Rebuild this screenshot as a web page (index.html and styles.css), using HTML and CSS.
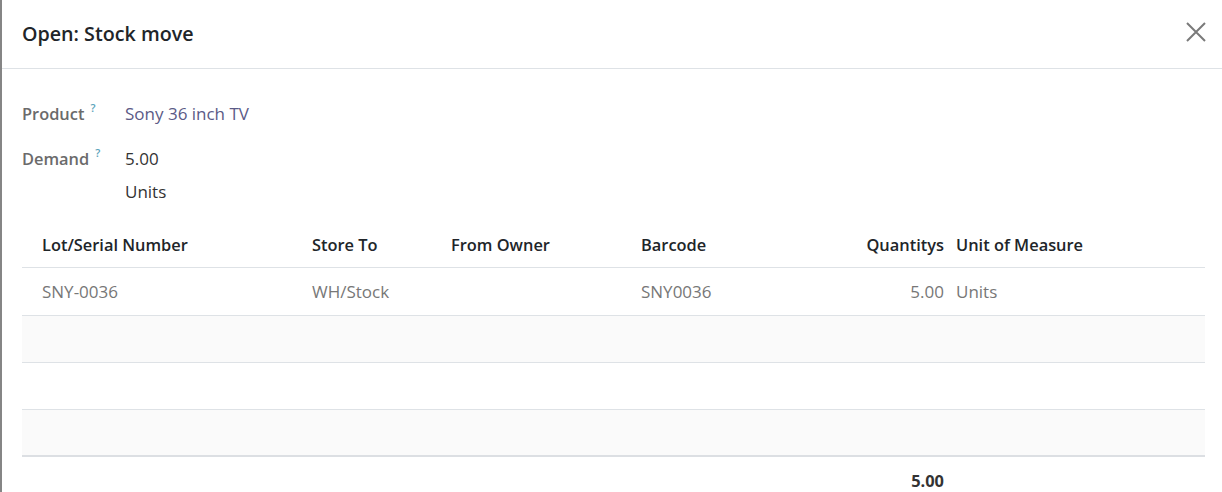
FILE: index.html
```html
<!DOCTYPE html>
<html>
<head>
<meta charset="utf-8">
<link rel="stylesheet" href="styles.css">
</head>
<body>
<div class="modal">
  <header class="modal-header">
    <h4 class="modal-title">Open: Stock move</h4>
    <button class="close" aria-label="Close">
      <svg width="20" height="20" viewBox="0 0 20 20"><path d="M1 1 L19 19 M19 1 L1 19" stroke="#7a7a7a" stroke-width="2" fill="none"/></svg>
    </button>
  </header>
  <div class="modal-body">
    <div class="fields">
      <div class="field">
        <div class="label">Product<sup>?</sup></div>
        <div class="value link">Sony 36 inch TV</div>
      </div>
      <div class="field">
        <div class="label">Demand<sup>?</sup></div>
        <div class="value stack"><span>5.00</span><span>Units</span></div>
      </div>
    </div>
    <div class="table">
      <div class="row head">
        <div class="c c1">Lot/Serial Number</div>
        <div class="c c2">Store To</div>
        <div class="c c3">From Owner</div>
        <div class="c c4">Barcode</div>
        <div class="c c5">Quantitys</div>
        <div class="c c6">Unit of Measure</div>
      </div>
      <div class="row data">
        <div class="c c1">SNY-0036</div>
        <div class="c c2">WH/Stock</div>
        <div class="c c3"></div>
        <div class="c c4">SNY0036</div>
        <div class="c c5">5.00</div>
        <div class="c c6">Units</div>
      </div>
      <div class="row empty striped"></div>
      <div class="row empty"></div>
      <div class="row empty striped last"></div>
      <div class="row foot">
        <div class="c c1"></div>
        <div class="c c2"></div>
        <div class="c c3"></div>
        <div class="c c4"></div>
        <div class="c c5">5.00</div>
        <div class="c c6"></div>
      </div>
    </div>
  </div>
</div>
</body>
</html>
```
FILE: styles.css
```css
html, body {
  margin: 0;
  padding: 0;
  background: #fff;
}
body {
  font-family: "Open Sans", "Noto Sans", sans-serif;
  font-size: 17px;
  color: #333;
}
.modal {
  border-left: 2px solid #858585;
  height: 492px;
  box-sizing: border-box;
  overflow: hidden;
}
.modal-header {
  height: 69px;
  box-sizing: border-box;
  border-bottom: 1px solid #dee2e6;
  display: flex;
  align-items: center;
  justify-content: space-between;
  padding: 0 16px 0 20px;
}
.modal-title {
  margin: 0;
  font-size: 19.7px;
  font-weight: 600;
  color: #212529;
  position: relative;
  top: -1px;
}
.close {
  border: 0;
  background: none;
  padding: 0;
  width: 20px;
  height: 20px;
  display: flex;
  position: relative;
  top: -2px;
}
.modal-body {
  padding: 33px 17px 0 20px;
}
.fields {
  display: flex;
  flex-direction: column;
  gap: 21px;
}
.field {
  display: flex;
  line-height: 24px;
}
.label {
  width: 103px;
  font-weight: 600;
  font-size: 16.4px;
  color: #6b6b6b;
  display: flex;
  align-items: flex-start;
}
.label sup {
  font-size: 11px;
  font-weight: 600;
  color: #5aa2ba;
  margin-left: 6px;
  line-height: 1;
  position: relative;
  top: 0px;
}
.value.link {
  color: #5b5a86;
}
.value.stack {
  display: flex;
  flex-direction: column;
  gap: 9px;
  color: #333;
}
.table {
  margin-top: 18px;
}
.row {
  display: grid;
  grid-template-columns: 282px 139px 190px 150px 166px 256px;
  height: 47px;
  box-sizing: border-box;
  border-bottom: 1px solid #dee2e6;
  align-items: center;
}
.row.head {
  height: 46px;
  font-weight: 600;
  font-size: 16.4px;
  color: #212529;
}
.row.data {
  height: 48px;
  color: #777;
}
.row.striped {
  background: #fafafa;
}
.row.last {
  border-bottom: 2px solid #dcdfe3;
}
.row.foot {
  border-bottom: 0;
  font-weight: 700;
  font-size: 16.4px;
  color: #333;
  height: 46px;
}
.c {
  padding: 0 8px;
  white-space: nowrap;
}
.c1 {
  padding-left: 20px;
}
.c5 {
  text-align: right;
  padding-right: 5px;
}
.c6 {
  padding-left: 7px;
}
```
